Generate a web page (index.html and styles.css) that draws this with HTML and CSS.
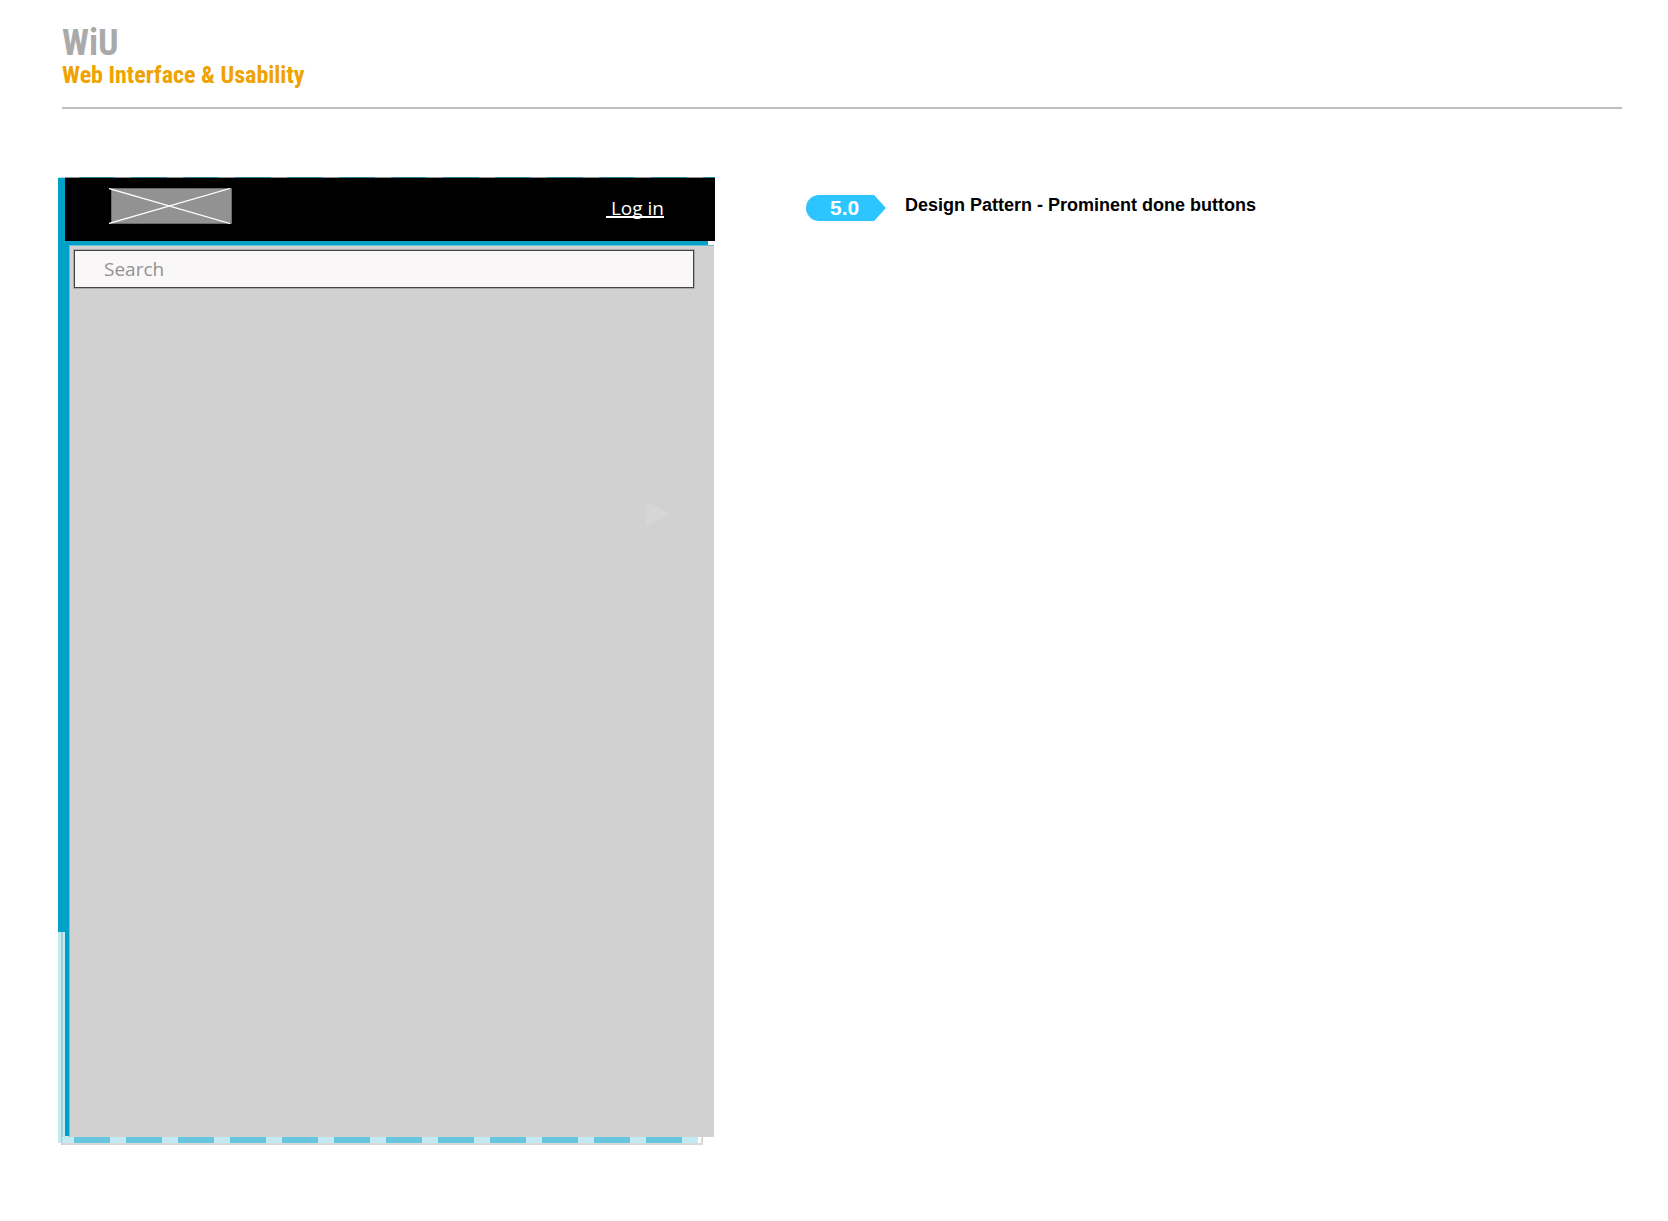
FILE: index.html
```html
<!DOCTYPE html>
<html lang="en">
<head>
<meta charset="utf-8">
<title>WiU - Web Interface &amp; Usability</title>
<link rel="stylesheet" href="styles.css">
</head>
<body>
<header class="page-header">
  <h1 class="brand">WiU</h1>
  <p class="tagline">Web Interface &amp; Usability</p>
</header>
<main class="content">
  <section class="phone" aria-label="Wireframe">
    <div class="top-bar">
      <svg class="logo" viewBox="0 0 123 36" aria-hidden="true">
        <rect x="2.5" y=".5" width="120" height="35" fill="#929292" stroke="#6c6c6c"/>
        <path d="M0 .5 121 35.500M0 35.500 121 .5" fill="none" stroke="#fff" stroke-width="1.300"/>
      </svg>
      <a class="login" href="#">&nbsp;Log in</a>
    </div>
    <div class="accent"></div>
    <div class="screen">
      <input class="search" type="search" placeholder="Search" aria-label="Search">
      <svg class="arrow" viewBox="0 0 26 24" aria-hidden="true"><path d="M0 0 26 12 0 24Z" fill="#d6d6d6"/></svg>
    </div>
    <div class="bottom-edge"><div class="dashes"></div></div>
  </section>
  <section class="note">
    <span class="badge">5.0</span>
    <h2 class="note-title">Design Pattern - Prominent done buttons</h2>
  </section>
</main>
</body>
</html>
```
FILE: styles.css
```css
* {
  box-sizing: border-box;
}

body {
  margin: 0;
  background: #fff;
  color: #000;
  font-family: "Liberation Sans", Arial, sans-serif;
}

.page-header {
  margin: 0 46px 0 62px;
  padding: 24px 0 18px;
  border-bottom: 2px solid #bebebe;
  font-family: "Roboto Condensed", Roboto, sans-serif;
  font-weight: bold;
}

.brand {
  margin: 0;
  color: #aaa;
  font-size: 36px;
  line-height: 38px;
}

.tagline {
  margin: 0;
  color: #efa200;
  font-size: 24px;
  line-height: 27px;
}

.content {
  display: grid;
  grid-template-columns: 657fr 816fr;
  gap: 91px;
  align-items: start;
  margin: 68px 46px 76px 58px;
}

.phone {
  background:
    linear-gradient(#00a0c8, #00a0c8) 0 1px / 7px 754px no-repeat,
    linear-gradient(#00a0c8, #00a0c8) 7px 0 / 4px calc(100% - 9px) no-repeat,
    linear-gradient(#a7cdd3, #a7cdd3) 3px 100% / 2px 100% no-repeat,
    linear-gradient(#c3e9f1, #c3e9f1) 0 0 / 11px calc(100% - 2px) no-repeat;
}

.top-bar {
  display: flex;
  align-items: flex-start;
  justify-content: space-between;
  height: 64px;
  margin-left: 7px;
  padding: 11px 51px 0 44px;
  background:
    repeating-linear-gradient(90deg, #8d9698 0 14px, #2b7f96 14px 50px, #8d9698 50px 52px) 0 0 / 100% 1px no-repeat,
    #000;
}

.logo {
  width: 123px;
  height: 36px;
}

.login {
  padding-top: 8px;
  color: #fff;
  font: 19px/24px "Open Sans", sans-serif;
  text-decoration: underline;
  text-decoration-skip-ink: none;
  text-decoration-thickness: 2px;
  text-underline-offset: 1px;
}

.accent {
  height: 4px;
  margin: 0 7px 0 11px;
  background: #00a0c8;
}

.screen {
  display: flex;
  flex-direction: column;
  align-items: flex-end;
  min-height: 892px;
  margin: 0 1px 0 11px;
  padding: 4px 20px 0 4px;
  border-top: 1px solid #72c1d4;
  border-left: 1px solid #72c1d4;
  background: #d1d1d1;
}

.search {
  width: 100%;
  height: 38px;
  margin: 0;
  padding: 0 29px 1px;
  border: 1px solid #444;
  border-radius: 0;
  box-shadow: 0 0 0 1px #aaa;
  background: #f9f7f8;
  appearance: none;
  font: 19px/24px "Open Sans", sans-serif;
}

.search::placeholder {
  color: #929292;
  opacity: 1;
}

.arrow {
  width: 26px;
  height: 24px;
  margin: 214px 22px 0 0;
}

.bottom-edge {
  height: 8px;
  margin: 0 12px 0 4px;
  padding-right: 3px;
  border-right: 2px solid #d9d9d9;
  border-bottom: 2px solid #d9d9d9;
}

.dashes {
  height: 6px;
  background: repeating-linear-gradient(90deg, #c3e9f1 0 12px, #66c6de 12px 48px, #c3e9f1 48px 52px);
}

.note {
  display: flex;
  align-items: flex-start;
  gap: 19px;
  padding-top: 18px;
}

.badge {
  width: 80px;
  height: 26px;
  padding-left: 24px;
  border-radius: 13px 0 0 13px;
  background: #2cc5ff;
  clip-path: polygon(0 0, 68px 0, 100% 50%, 68px 100%, 0 100%);
  color: #fff;
  font-size: 21px;
  font-weight: bold;
  line-height: 26px;
}

.note-title {
  margin: 0;
  font-size: 18px;
  line-height: 20px;
}
```
